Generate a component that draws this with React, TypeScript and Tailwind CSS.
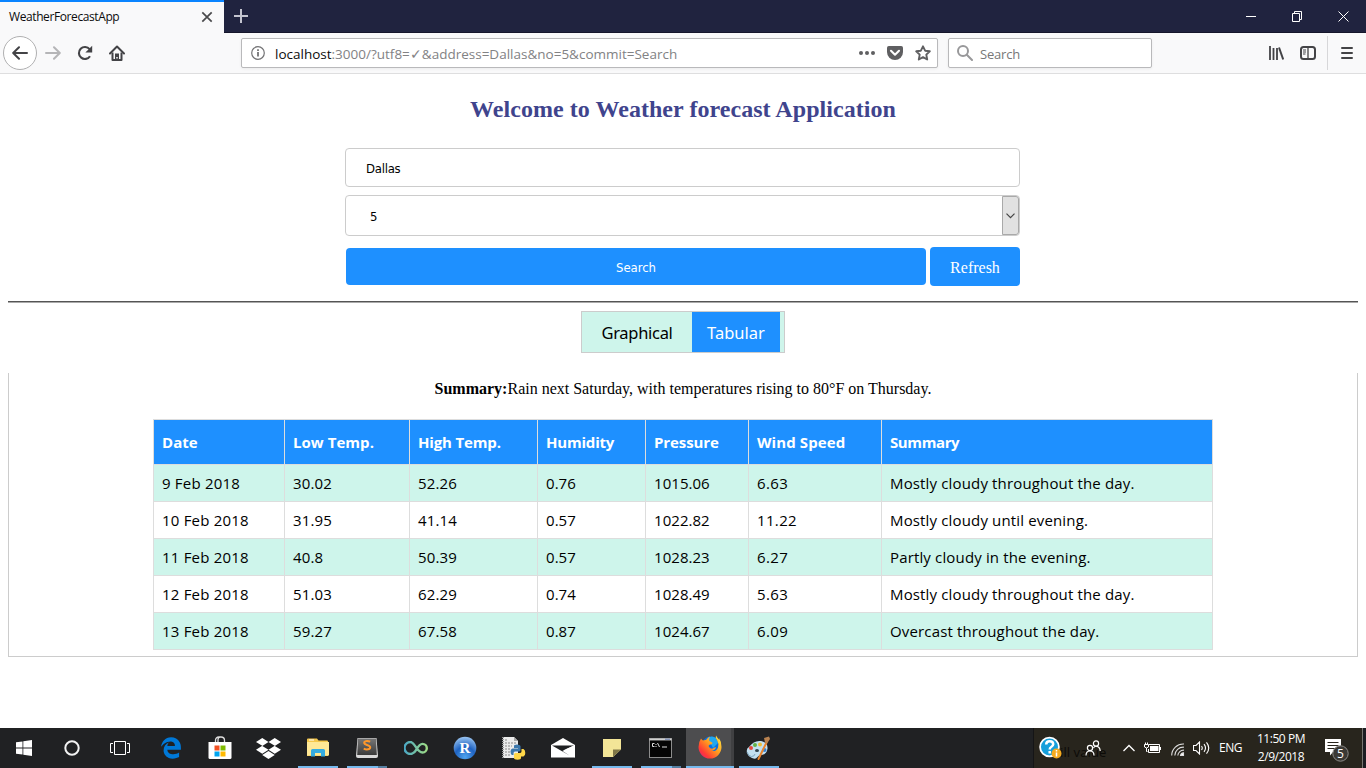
import React from "react";
import { FaDropbox, FaEdgeLegacy } from "react-icons/fa6";

const segoe = "font-['Open_Sans','Noto_Sans',sans-serif]";
const tahoma = "font-['DejaVu_Sans_Condensed','DejaVu_Sans',sans-serif]";
const serif = "font-['Liberation_Serif',serif]";

const columns = [
  { label: "Date", width: "w-[131px]", head: "tracking-[0.05px]", body: "tracking-[0.2px]" },
  { label: "Low Temp.", width: "w-[125px]", head: "tracking-[0.05px]", body: "tracking-[0.12px]" },
  { label: "High Temp.", width: "w-[128px]", head: "tracking-[-0.15px]", body: "tracking-[0.12px]" },
  { label: "Humidity", width: "w-[108px]", head: "tracking-[-0.2px]", body: "tracking-[0.05px]" },
  { label: "Pressure", width: "w-[103px]", head: "tracking-[-0.1px]", body: "tracking-[0.05px]" },
  { label: "Wind Speed", width: "w-[133px]", head: "tracking-[0.1px]", body: "tracking-[0.35px]" },
  { label: "Summary", width: "w-[331px]", head: "tracking-[-0.4px]", body: "tracking-[0.15px]" },
];

const forecast = [
  ["9 Feb 2018", "30.02", "52.26", "0.76", "1015.06", "6.63", "Mostly cloudy throughout the day."],
  ["10 Feb 2018", "31.95", "41.14", "0.57", "1022.82", "11.22", "Mostly cloudy until evening."],
  ["11 Feb 2018", "40.8", "50.39", "0.57", "1028.23", "6.27", "Partly cloudy in the evening."],
  ["12 Feb 2018", "51.03", "62.29", "0.74", "1028.49", "5.63", "Mostly cloudy throughout the day."],
  ["13 Feb 2018", "59.27", "67.58", "0.87", "1024.67", "6.09", "Overcast throughout the day."],
];

function TabStrip() {
  return (
    <header className="flex h-[33px] border-b border-[#15162b] bg-[#20233f] text-white">
      <div className="flex h-[33px] w-[224px] shrink-0 items-center justify-between border-t-2 border-[#0a84ff] bg-[#f9f9fa] pr-[11px] pl-[9px]">
        <span className={`${segoe} mb-0.5 text-[12px] tracking-[-0.4px] whitespace-nowrap text-[#0c0c0d]`}>WeatherForecastApp</span>
        <svg className="mb-px" width="12" height="12" viewBox="0 0 12 12" stroke="#4a4a4c" strokeWidth="1.7">
          <path d="M1.3 1.3l9.4 9.4M10.7 1.3L1.3 10.7" />
        </svg>
      </div>
      <div className="flex h-8 w-[34px] items-center justify-center">
        <svg width="14" height="14" viewBox="0 0 14 14" stroke="#c3c4cf" strokeWidth="2">
          <path d="M7 0v14M0 7h14" />
        </svg>
      </div>
      <div className="ml-auto flex h-[33px] items-center">
        <div className="flex w-[46px] justify-center">
          <svg width="10" height="10" viewBox="0 0 10 10" stroke="#fff"><path d="M0 4.5h10" /></svg>
        </div>
        <div className="flex w-[46px] justify-center">
          <svg className="mr-px" width="10" height="11" viewBox="0 0 10 11" stroke="#fff" fill="none"><path d="M.5 2.5h7v8h-7zM2.5 2.5v-2h7v8h-2" /></svg>
        </div>
        <div className="flex w-[46px] justify-center">
          <svg width="11" height="11" viewBox="0 0 11 11" stroke="#fff"><path d="M.5.5l10 10M10.5.5l-10 10" /></svg>
        </div>
      </div>
    </header>
  );
}

function Toolbar() {
  return (
    <nav className="flex h-[41px] items-center border-b border-[#dededf] bg-[#f9f9fa]">
      <div className="ml-[3px] flex size-[34px] items-center justify-center rounded-full border border-[#b0b0b1] bg-white">
        <svg width="16" height="14" viewBox="0 0 16 14" fill="none" stroke="#434346" strokeWidth="2" strokeLinecap="round" strokeLinejoin="round"><path d="M15 7H1.5M7 1.2L1.2 7 7 12.8" /></svg>
      </div>
      <svg className="ml-2" width="16" height="14" viewBox="0 0 16 14" fill="none" stroke="#b5b5b7" strokeWidth="2" strokeLinecap="round" strokeLinejoin="round"><path d="M1 7h13.500M9 1.2L14.800 7 9 12.800" /></svg>
      <svg className="ml-4" width="16" height="16" viewBox="0 0 16 16" fill="none" stroke="#434346" strokeWidth="2.100"><path d="M13 11.200A6 6 0 1 1 12.600 4.200" /><path d="M15.200 .8v6.800H8.400z" fill="#434346" stroke="none" /></svg>
      <svg className="ml-4" width="16" height="16" viewBox="0 0 16 16" fill="none" stroke="#434346" strokeWidth="2"><path d="M1 8.500L8 1.500l7 7" strokeLinecap="round" strokeLinejoin="round" /><path d="M3.500 7.500V15h9V7.500" strokeLinejoin="round" /><path d="M6 8.500h4V15H6z" fill="#434346" stroke="none" /><path d="M8 12v1.500" stroke="#f9f9fa" strokeWidth="1.500" /></svg>

      <div className="ml-[116px] flex h-[30px] w-[697px] items-center rounded-[2px] border border-[#b9b9bb] bg-white shadow-[0_1px_3px_rgba(0,0,0,0.06)]">
        <svg className="ml-[9px]" width="14" height="14" viewBox="0 0 14 14" fill="none" stroke="#737375" strokeWidth="1.200"><circle cx="7" cy="7" r="6.300" /><path d="M7 6v4.500M7 3.300v1.600" strokeWidth="1.800" /></svg>
        <div className={`${segoe} mt-[3px] ml-[10px] text-[13.5px] whitespace-nowrap text-[#828284]`}>
          <span className="text-[#0c0c0d]">localhost</span>:3000/?utf8=✓&amp;address=Dallas&amp;no=5&amp;commit=Search
        </div>
        <svg className="mr-3 ml-auto" width="16" height="4" viewBox="0 0 16 4" fill="#5f5f61"><circle cx="2" cy="2" r="2" /><circle cx="8" cy="2" r="2" /><circle cx="14" cy="2" r="2" /></svg>
        <svg className="mr-3" width="16" height="14" viewBox="0 0 16 14"><path d="M1.800 0h12.400Q16 0 16 1.800V6a8 8 0 0 1-16 0V1.800Q0 0 1.800 0z" fill="#5f5f61" /><path d="M4 4.800l4 3.900 4-3.900" fill="none" stroke="#fff" strokeWidth="2.100" strokeLinecap="round" strokeLinejoin="round" /></svg>
        <svg className="mr-[6px]" width="16" height="16" viewBox="0 0 16 16" fill="none" stroke="#5f5f61" strokeWidth="1.900" strokeLinejoin="round"><path d="M8 1.300l2.100 4.400 4.700.6-3.500 3.300.9 4.900L8 12.100l-4.200 2.400.9-4.900L1.200 6.300l4.700-.6z" /></svg>
      </div>

      <div className="ml-[10px] flex h-[30px] w-[204px] items-center rounded-[2px] border border-[#b9b9bb] bg-white shadow-[0_1px_3px_rgba(0,0,0,0.06)]">
        <svg className="ml-2" width="16" height="16" viewBox="0 0 16 16" fill="none" stroke="#98989a" strokeWidth="2" strokeLinecap="round"><circle cx="6" cy="6" r="5" /><path d="M9.800 9.800L15 15" /></svg>
        <span className={`${segoe} mt-[3px] ml-[7px] text-[13px] tracking-[-0.2px] text-[#777]`}>Search</span>
      </div>

      <svg className="ml-auto" width="16" height="14" viewBox="0 0 16 14" stroke="#434346"><path d="M2 0v14M5.500 2v12M9 2v12" strokeWidth="1.800" /><path d="M11 1.500l4.200 12" strokeWidth="2" /></svg>
      <svg className="ml-4" width="16" height="14" viewBox="0 0 16 14" fill="none" stroke="#434346" strokeWidth="2"><rect x="1" y="1" width="14" height="12" rx="2.500" /><path d="M8 1v12" strokeWidth="1.300" /><path d="M3 4h3M3 6h3M3 8h2.500" strokeWidth="1" /></svg>
      <div className="ml-[11px] h-[34px] w-px bg-[#d7d7d9]" />
      <svg className="mr-[13px] ml-[13px]" width="12" height="12" viewBox="0 0 12 12" stroke="#434346" strokeWidth="2" strokeLinecap="round"><path d="M1 1h10M1 6h10M1 11h10" /></svg>
    </nav>
  );
}

function SearchForm() {
  return (
    <form className="ml-[337px] w-[675px]" onSubmit={(e) => e.preventDefault()}>
      <div className={`${tahoma} flex h-[39px] items-center rounded-[4px] border border-[#ccc] pt-0.5 pl-5 text-[13px] tracking-[-0.25px]`}>Dallas</div>
      <div className={`${tahoma} mt-2 flex h-[41px] items-center justify-between rounded-[4px] border border-[#ccc] pl-6 text-[13px]`}>
        <span className="pt-0.5">5</span>
        <span className="flex h-[39px] w-[17px] items-center justify-center rounded-r-[3px] border border-[#a9a9a9] bg-[#e1e1e1]">
          <svg width="9" height="6" viewBox="0 0 9 6" fill="none" stroke="#444" strokeWidth="1.200"><path d="M.5.7l4 4 4-4" /></svg>
        </span>
      </div>
      <div className="mt-[11px] flex h-[39px] items-center justify-between text-white">
        <button className={`${tahoma} ml-px h-[37px] w-[580px] rounded-[4px] bg-[#1e90ff] pt-0.5 text-[13px] tracking-[-0.05px]`}>Search</button>
        <button className={`${serif} h-[39px] w-[90px] rounded-[4px] bg-[#1e90ff] pt-0.5 text-[16px]`}>Refresh</button>
      </div>
    </form>
  );
}

function ForecastTable() {
  return (
    <table className={`${segoe} mx-auto w-[1060px] table-fixed border-separate border-spacing-0 border-t border-l border-[#ddd] text-left`}>
      <thead>
        <tr className="h-[45px] bg-[#1e90ff] text-white">
          {columns.map((c) => (
            <th key={c.label} className={`${c.width} ${c.head} border-r border-b border-[#ddd] p-0 pl-2 text-[15px] leading-5 font-bold`}>{c.label}</th>
          ))}
        </tr>
      </thead>
      <tbody>
        {forecast.map((row) => (
          <tr key={row[0]} className="h-[37px] odd:bg-[#cef5eb]">
            {row.map((cell, i) => (
              <td key={i} className={`${columns[i].body} border-r border-b border-[#ddd] p-0 pl-2 text-[15px] leading-5 font-medium whitespace-nowrap`}>{cell}</td>
            ))}
          </tr>
        ))}
      </tbody>
    </table>
  );
}

const Start = () => (
  <svg width="16" height="16" viewBox="0 0 16 16" fill="#fff"><path d="M0 2.300l6.500-.9v6.200H0zM7.300 1.300L16 0v7.600H7.300zM0 8.400h6.500v6.200L0 13.700zM7.300 8.400H16V16l-8.700-1.200z" /></svg>
);
const Cortana = () => (
  <svg width="16" height="16" viewBox="0 0 16 16" fill="none" stroke="#f2f2f2" strokeWidth="2"><circle cx="8" cy="8" r="6.700" /></svg>
);
const TaskView = () => (
  <svg width="20" height="14" viewBox="0 0 20 14" fill="none" stroke="#fff"><path d="M4.500.5h11v13h-11zM3 2.500H.5v9H3M17 2.500h2.500v9H17" /></svg>
);
const Edge = () => <FaEdgeLegacy size={22} color="#0078d7" />;
const Store = () => (
  <svg width="24" height="24" viewBox="0 0 24 24"><path d="M7.500 7V4.500Q7.500 1 11 1h2q3.500 0 3.500 3.500V7M10 7V4q0-3 2.500-3" fill="none" stroke="#ddd" strokeWidth="1.300" /><path d="M.5 6h23v15.500q0 1.500-1.500 1.500H2q-1.500 0-1.500-1.500z" fill="#fff" /><path d="M6.500 9.500h5v5h-5z" fill="#f25022" /><path d="M12.500 9.500h5v5h-5z" fill="#7fba00" /><path d="M6.500 15.500h5v5h-5z" fill="#00a4ef" /><path d="M12.500 15.500h5v5h-5z" fill="#ffb900" /></svg>
);
const Dropbox = () => <FaDropbox size={25} color="#fff" />;
const Explorer = () => (
  <svg width="22" height="20" viewBox="0 0 22 20"><path d="M0 1.500Q0 .5 1 .5h9l1.500 2H20q1 0 1 1V18H0z" fill="#f5c84c" /><path d="M0 4h22v13.500H0z" fill="#ffe896" /><path d="M2 1.500h5v1H2z" fill="#fff" /><path d="M4 18.500v-6q0-1.500 1.500-1.500h11q1.500 0 1.500 1.500v6h-4V15H8v3.500z" fill="#35ace0" /></svg>
);
const Sublime = () => (
  <svg width="24" height="22" viewBox="0 0 24 22"><defs><linearGradient id="sub" x1="0" y1="0" x2="0" y2="1"><stop stopColor="#777" /><stop offset="1" stopColor="#3a3a3a" /></linearGradient></defs><path d="M2.500 1h19l1.500 18q0 2-2 2H3q-2 0-2-2z" fill="#d9d9d9" /><path d="M3 1.500h18l.8 16.500H2.200z" fill="url(#sub)" /><path d="M15.200 4.700C12 3.300 9 4 9.200 6.200c.2 2 6 1.500 6 4 0 2.300-3.500 2.900-6.500 1.500" fill="none" stroke="#ff9729" strokeWidth="2" /></svg>
);
const Infinity = () => (
  <svg width="24" height="14" viewBox="0 0 24 14" fill="none"><defs><linearGradient id="inf"><stop stopColor="#4ba8c4" /><stop offset="1" stopColor="#9edb86" /></linearGradient></defs><path d="M12.500 8.500C10 12.500 8.500 13 6.500 13a6 6 0 1 1 0-12C11 1 12.500 11.500 18.500 11.500a4.300 4.300 0 1 0 0-8.600c-2.500 0-4 2-6 5.600z" stroke="url(#inf)" strokeWidth="2.400" /></svg>
);
const RStudio = () => (
  <svg width="24" height="24" viewBox="0 0 24 24"><defs><radialGradient id="rs" cx=".5" cy=".9" r=".9"><stop stopColor="#50a4ee" /><stop offset=".5" stopColor="#1f63c2" /><stop offset="1" stopColor="#9ac5f2" /></radialGradient></defs><circle cx="12" cy="12" r="11.300" fill="url(#rs)" /><text x="12" y="17" textAnchor="middle" fill="#fff" fontFamily="Liberation Serif" fontSize="15" fontWeight="bold">R</text></svg>
);
const PythonFile = () => (
  <svg width="24" height="24" viewBox="0 0 24 24"><path d="M1 1h11l4 4v17H1z" fill="#ececec" /><path d="M12 1v4h4z" fill="#aaa" /><path d="M3 4h3M3 7h11M3 10h7M3 13h6M3 16h5M3 19h6" stroke="#888" strokeDasharray="2 1" /><path d="M1 1v21" stroke="#999" strokeWidth="2" strokeDasharray="1 1" /><path d="M12 12V10q0-1.500 3-1.500t3.500 1.500v4q0 1.500-1.500 1.500h-4q-1.500 0-1.500 2V19H10q-1.500-1-1.500-3.500T10.500 12.500H16V12z" fill="#3d78ac" /><path d="M19.500 13v2.500q0 1.500-2 1.500h-4Q12 17 12 18.500V22q0 1.700 3.500 1.700T19 22v-1.500h2.500q1.800-.5 1.800-3.500T21.500 13z" fill="#ffd748" /></svg>
);
const Mail = () => (
  <svg width="24" height="20" viewBox="0 0 24 20"><path d="M0 7L12 0l12 7v12.500H0z" fill="#fff" /><path d="M1 7.500h22L14 11.500l-2.500 1.500 7 4.500z" fill="#202123" /><path d="M14.500 11.500L24 7v12.500z" fill="#fff" /></svg>
);
const Sticky = () => (
  <svg width="18" height="18" viewBox="0 0 18 18"><path d="M0 0h18v10.500L10 18H0z" fill="#f3e597" /><path d="M18 10.500h-8V18z" fill="#807747" /></svg>
);
const Terminal = () => (
  <svg width="23" height="20" viewBox="0 0 23 20"><path d="M0 0h23v20H0z" fill="#8c8c8c" /><path d="M.5.5h22v2H.5z" fill="#cfcfcf" /><path d="M1 2.500h21V19H1z" fill="#050505" /><path d="M16 1.200h5" stroke="#667bb0" /><path d="M5.500 5.500H3.500v3h2M7 6v1M7 8v1M8.500 5l2 4M13 9h5" stroke="#ddd" fill="none" /></svg>
);
const Firefox = () => (
  <svg width="24" height="24" viewBox="0 0 24 24"><defs><linearGradient id="fx" x1="1" y1="0" x2="0" y2="1"><stop stopColor="#fff14a" /><stop offset=".45" stopColor="#ff9a1f" /><stop offset=".75" stopColor="#ff3b35" /><stop offset="1" stopColor="#e31587" /></linearGradient></defs><circle cx="12.500" cy="10" r="8.500" fill="#0a6fe0" /><path d="M10 3q4-3 8 0l2 5-5 5z" fill="#20a7ef" /><path d="M3 3.500q1 1.500 2 2 1.500-.7 3-.5Q10 2 12 1.500q-1.500 2.500-.5 4.500l3 1.700q0 1.800-3 2.100-2 1.500.5 3.200 2.500 1.500 4.500-.5 1-.6 1.500.2-1.500 3-5 3.200 5.500 1 7-3.500 1-4-1-7.400-2-2-1-4.500 2 3.500 3.500 4.500-.5-1-.5-2 2.500 3.500 2.500 9a11.500 11.500 0 1 1-23 0q0-5 2.500-8.500z" fill="url(#fx)" /></svg>
);
const Paint = () => (
  <svg width="25" height="24" viewBox="0 0 25 24"><path d="M3 11Q8 4 15 5q7 1.500 6.500 7.500T15 19q-3 .5-4 2.500T6 22 1 16.500 3 11z" fill="#c3e0f0" /><path d="M1 16q1.500 4.500 4.500 4.500T9 18" stroke="#80a7c0" fill="none" /><circle cx="5" cy="12" r="2" fill="#e6483c" /><circle cx="9" cy="9" r="2" fill="#62b146" /><circle cx="14" cy="8.500" r="2" fill="#efbc38" /><circle cx="18.500" cy="14" r="2" fill="#3581d2" /><ellipse cx="11" cy="14.500" rx="2" ry="1.500" fill="#31434d" /><path d="M20.500 6.500L12.500 23" stroke="#e8842f" strokeWidth="2" strokeLinecap="round" /><path d="M18 2l5-1.500L24 3l-3 4.500-2-1z" fill="#b98250" /></svg>
);

const pinned = [Edge, Store, Dropbox, Explorer, Sublime, Infinity, RStudio, PythonFile, Mail, Sticky, Terminal, Firefox, Paint];

function Underline({ index }: { index: number }) {
  if ([3, 9, 12].includes(index)) return <div className="h-0.5 w-10 bg-[#76b9ed]" />;
  if (index === 4 || index === 10)
    return <div className="flex h-0.5 w-10"><span className="w-[31px] bg-[#76b9ed]" /><span className="flex-1 bg-[#557fa1]" /></div>;
  if (index === 11) return <div className="h-0.5 w-12 bg-[#76b9ed]" />;
  return <div className="h-0.5" />;
}

function Taskbar() {
  return (
    <footer className={`${segoe} flex h-10 bg-[#202123] text-white`}>
      {[Start, Cortana, TaskView].map((Icon, i) => (
        <div key={i} className="flex w-12 items-center justify-center"><Icon /></div>
      ))}
      <div className="ml-0.5 flex">
        {pinned.map((Icon, i) => (
          <div key={i} className="flex w-[49px] flex-col items-center">
            <div className={i === 11 ? "flex h-[38px] w-12 items-center justify-center border-r-[3px] border-[#404042] bg-[#4d4d4f] pl-[3px]" : "flex h-[38px] items-center justify-center pt-0.5"}><Icon /></div>
            <Underline index={i} />
          </div>
        ))}
      </div>
      <div className="ml-auto flex w-[333px] items-center border-l border-[#151516] bg-[#28251d]">
        <div className="relative ml-[5px] flex h-10 w-[76px] items-center">
          <span className="absolute top-[15px] left-[21px] text-[13px] leading-[18px] tracking-[0.1px] whitespace-nowrap text-[#0c0b08]">ill value</span>
          <svg className="relative" width="24" height="24" viewBox="0 0 24 24"><circle cx="10.500" cy="11" r="9.400" fill="#169fdb" stroke="#fff" strokeWidth="1.800" /><path d="M7.200 8.500q0-3.200 3.500-3.200t3.500 3q0 1.700-2 2.700-1.500.8-1.500 2.500M10.700 15v2.500" fill="none" stroke="#fff" strokeWidth="2.500" /><circle cx="17.500" cy="17.500" r="5" fill="#f5ab20" /><path d="M17.500 16.500v4M17.500 14v1.500" stroke="#fff" strokeWidth="1.500" /></svg>
          <svg className="relative ml-[22px]" width="16" height="16" viewBox="0 0 16 16" fill="none" stroke="#fff" strokeWidth="1.200"><circle cx="11" cy="3.500" r="2.600" /><circle cx="5" cy="8" r="2.600" /><path d="M1 15.500Q1 11 5 11t4 4.500M8.500 8q1-2 3-1.700 3.500.3 3.700 4.700" /></svg>
        </div>
        <svg className="ml-2" width="12" height="8" viewBox="0 0 12 8" fill="none" stroke="#fff" strokeWidth="1.300"><path d="M.5 7L6 1.500 11.500 7" /></svg>
        <svg className="ml-[9px]" width="17" height="12" viewBox="0 0 17 12" fill="none" stroke="#fff"><path d="M5 2.500h10.500v8H4.500V7M16.500 5v3" /><path d="M6 4h8.500v5H6z" fill="#fff" stroke="none" /><path d="M.5 2.500h4V5q-2 2-4 0zM1.500.5v2M3.500.5v2M2.500 6v3.500h1" /></svg>
        <svg className="mt-0.5 ml-[10px]" width="14" height="13" viewBox="0 0 14 13" fill="none" stroke="#ddd" strokeWidth="1.100"><path d="M.7 12.500A11.500 11.500 0 0 1 13 1M3.800 12.500A8.500 8.500 0 0 1 13 4.200M6.800 12.500A5.700 5.700 0 0 1 13 7.200" /><path d="M9.500 12.500q.3-2.500 3-2.700v2.700z" fill="#fff" /></svg>
        <svg className="ml-2" width="17" height="14" viewBox="0 0 17 14" fill="none" stroke="#fff" strokeWidth="1.100"><path d="M.5 4.500H3l3.500-3.500v12L3 9.500H.5zM8.500 5q1.500 2 0 4M11 3.200q3 3.800 0 7.600M13.500 1.300q4.500 5.700 0 11.400" /></svg>
        <span className="ml-[9px] w-[24px] text-[12px] tracking-[-0.5px]">ENG</span>
        <div className="ml-3 flex w-[52px] flex-col items-center text-[12px] leading-[18px] tracking-[-0.45px] whitespace-nowrap"><span>11:50 PM</span><span>2/9/2018</span></div>
        <svg className="mt-1 ml-[17px]" width="25" height="24" viewBox="0 0 25 24"><path d="M1 1h16v13H9l-3 3.500V14H1z" fill="#fff" /><path d="M3.500 4.500h11M3.500 7.500h11M3.500 10.500h8" stroke="#28251d" /><circle cx="16.500" cy="15.500" r="7.700" fill="#3b3935" stroke="#8c8a87" /><text x="16.500" y="20" textAnchor="middle" fontFamily="Open Sans" fontSize="12" fill="#fff">5</text></svg>
        <div className="ml-auto h-full w-1 border-l border-[#777671] bg-[#1b1d22]" />
      </div>
    </footer>
  );
}

export default function App() {
  return (
    <div className="flex h-[768px] w-[1366px] flex-col overflow-hidden bg-white text-black">
      <TabStrip />
      <Toolbar />
      <main className="flex-1 px-2">
        <h2 className={`${serif} flex h-[74px] items-center justify-center pb-[5px] text-[24px] font-bold tracking-[0.05px] text-[#3f448d]`}>Welcome to Weather forecast Application</h2>
        <SearchForm />
        <hr className="mt-[15px] h-0.5 border-0 border-t border-b border-t-[#555] border-b-[#aaa]" />
        <div className="mx-auto mt-2 flex h-[42px] w-[204px] border border-[#ccc] bg-[#cef5eb] font-['Noto_Sans',sans-serif] text-[16.5px]">
          <button className="w-[110px] pt-[3px] tracking-[-0.3px]">Graphical</button>
          <button className="w-[88px] bg-[#1e90ff] pt-[3px] text-white">Tabular</button>
        </div>
        <section className="mt-5 h-[284px] border-x border-b border-[#ccc]">
          <p className={`${serif} flex h-[46px] items-center justify-center pb-[14px] text-[16px]`}><b>Summary:</b>Rain next Saturday, with temperatures rising to 80°F on Thursday.</p>
          <ForecastTable />
        </section>
      </main>
      <Taskbar />
    </div>
  );
}
